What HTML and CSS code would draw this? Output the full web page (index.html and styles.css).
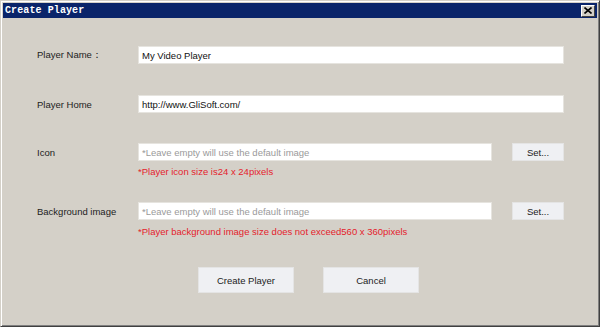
FILE: index.html
```html
<!DOCTYPE html>
<html>
<head>
<meta charset="utf-8">
<link rel="stylesheet" href="styles.css">
</head>
<body>
<div class="window">
  <div class="titlebar">
    <span class="title">Create Player</span>
    <span class="close"><svg width="8" height="7" viewBox="0 0 8 7"><path d="M0.5 0.5 L7.5 6.5 M7.5 0.5 L0.5 6.5" stroke="#000" stroke-width="1.6"/></svg></span>
  </div>
  <div class="content">
    <div class="row r1">
      <span class="label">Player Name：</span>
      <div class="field wide">My Video Player</div>
    </div>
    <div class="row r2">
      <span class="label">Player Home</span>
      <div class="field wide">http://www.GliSoft.com/</div>
    </div>
    <div class="row r3">
      <span class="label">Icon</span>
      <div class="field narrow placeholder">*Leave empty will use the default image</div>
      <div class="btn set">Set...</div>
    </div>
    <div class="note n1">*Player icon size is24 x 24pixels</div>
    <div class="row r4">
      <span class="label">Background image</span>
      <div class="field narrow placeholder">*Leave empty will use the default image</div>
      <div class="btn set">Set...</div>
    </div>
    <div class="note n2">*Player background image size does not exceed560 x 360pixels</div>
    <div class="actions">
      <div class="btn big">Create Player</div>
      <div class="btn big">Cancel</div>
    </div>
  </div>
</div>
</body>
</html>
```
FILE: styles.css
```css
html, body {
  margin: 0;
  padding: 0;
  background: #d4d0c8;
}
.window {
  width: 600px;
  height: 327px;
  box-sizing: border-box;
  background: #d4d0c8;
  border-top: 1px solid #d4d0c8;
  border-left: 1px solid #d4d0c8;
  border-right: 1px solid #404040;
  border-bottom: 1px solid #404040;
  box-shadow: inset 1px 1px 0 #fff, inset -1px -1px 0 #808080;
  padding: 2px;
  font-family: "Liberation Sans", Arial, sans-serif;
  font-size: 9.5px;
  color: #222;
}
.titlebar {
  height: 15px;
  background: #0a246a;
  display: flex;
  align-items: center;
  justify-content: space-between;
  padding: 0 2px 0 2px;
}
.title {
  font-family: "Liberation Mono", monospace;
  font-weight: bold;
  font-size: 10px;
  color: #fff;
  letter-spacing: 0.1px;
}
.close {
  width: 14px;
  height: 12px;
  box-sizing: border-box;
  background: #d4d0c8;
  border-top: 1px solid #fff;
  border-left: 1px solid #fff;
  border-right: 1px solid #404040;
  border-bottom: 1px solid #404040;
  display: flex;
  align-items: center;
  justify-content: center;
}
.content {
  padding-left: 34px;
  display: flex;
  flex-direction: column;
}
.row {
  display: flex;
  align-items: center;
  height: 18px;
}
.label {
  width: 101px;
  flex: none;
}
.field {
  height: 18px;
  box-sizing: border-box;
  background: #fff;
  border: 1px solid #e6e4df;
  padding-left: 3px;
  display: flex;
  align-items: center;
  color: #111;
}
.wide { width: 426px; }
.narrow { width: 354px; }
.placeholder { color: #9a9a9a; }
.btn {
  box-sizing: border-box;
  background: #eff0f3;
  border: 1px solid #e4e4e4;
  display: flex;
  align-items: center;
  justify-content: center;
  color: #222;
}
.set {
  width: 52px;
  height: 18px;
  margin-left: 20px;
}
.r1 { margin-top: 28px; }
.r2 { margin-top: 31px; }
.r3 { margin-top: 30px; }
.r4 { margin-top: 24px; }
.note {
  color: #e4222c;
  padding-left: 101px;
  height: 12px;
  line-height: 12px;
}
.n1 { margin-top: 5px; }
.n2 { margin-top: 6px; }
.actions {
  display: flex;
  gap: 29px;
  margin-top: 29px;
  padding-left: 161px;
}
.big {
  width: 96px;
  height: 26px;
}
```
